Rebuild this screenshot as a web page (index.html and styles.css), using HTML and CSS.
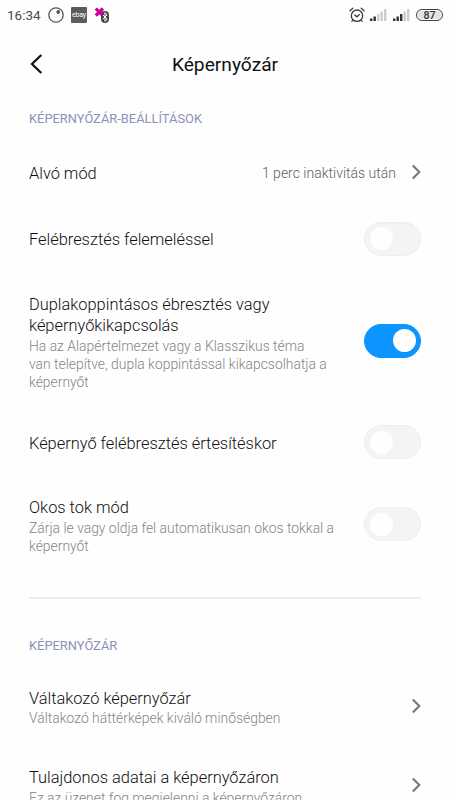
FILE: index.html
```html
<!DOCTYPE html>
<html lang="hu">
<head>
<meta charset="utf-8">
<title>Képernyőzár</title>
<link rel="stylesheet" href="styles.css">
</head>
<body>
<div class="screen">
  <div class="status">
    <span class="clock">16:34</span>
    <svg class="ring" width="16" height="16" viewBox="0 0 16 16"><circle cx="8" cy="8" r="7.2" fill="none" stroke="#555" stroke-width="1.3"/><circle cx="10.2" cy="5" r="1.9" fill="#555"/></svg>
    <span class="ebay">ebay</span>
    <svg class="bt" width="17" height="17" viewBox="0 0 17 17"><rect x="7" y="4" width="8" height="12" rx="4" fill="#444"/><path d="M8.8 7.8l4.4 4.4-2.2 2.2V5.6l2.2 2.2-4.4 4.4" fill="none" stroke="#fff" stroke-width="1"/><path d="M1.8 1.5l6.8 7M9 1.5L1.8 8.5" stroke="#c8009c" stroke-width="3.2"/></svg>
    <span class="spacer"></span>
    <svg class="alarm" width="16" height="16" viewBox="0 0 16 16" fill="none" stroke="#3c3c3c" stroke-width="1.3" stroke-linecap="round"><circle cx="8" cy="8.7" r="5.7"/><path d="M1 3.8L3.8 1.3M12.2 1.3L15 3.8M5.8 8l2.1 1.8L10.4 7.6M3.8 13.4l-1 1M12.2 13.4l1 1"/></svg>
    <svg class="signal" width="17" height="13" viewBox="0 0 17 13"><path d="M0 9.5h2.4V12H0zM3.5 7.5h2.4V12H3.5z" fill="#333"/><path d="M7 5h2.4v7H7zM10.5 2.5h2.4V12h-2.4zM14 0h2.4v12H14z" fill="#ccc"/></svg>
    <svg class="signal second" width="17" height="13" viewBox="0 0 17 13"><path d="M0 9.5h2.4V12H0zM3.5 7.5h2.4V12H3.5zM7 5h2.4v7H7z" fill="#333"/><path d="M10.5 2.5h2.4V12h-2.4zM14 0h2.4v12H14z" fill="#ccc"/></svg>
    <span class="battery">87</span>
  </div>
  <header class="header">
    <svg class="back" width="14" height="22" viewBox="0 0 14 22"><path d="M12.3 2L3 11l9.3 9" fill="none" stroke="#111" stroke-width="2.2"/></svg>
    <h1>Képernyőzár</h1>
  </header>
  <h2 class="section">KÉPERNYŐZÁR-BEÁLLÍTÁSOK</h2>
  <div class="row single">
    <p class="title">Alvó mód</p>
    <span class="value">1 perc inaktivitás után</span>
    <svg class="chevron" width="10" height="16" viewBox="0 0 10 16"><path d="M1.8 1.5L8.3 8l-6.5 6.5"/></svg>
  </div>
  <div class="row single">
    <p class="title">Felébresztés felemeléssel</p>
    <span class="toggle"></span>
  </div>
  <div class="row">
    <div class="text">
      <p class="title">Duplakoppintásos ébresztés vagy<br>képernyőkikapcsolás</p>
      <p class="sub">Ha az Alapértelmezet vagy a Klasszikus téma<br>van telepítve, dupla koppintással kikapcsolhatja a<br>képernyőt</p>
    </div>
    <span class="toggle on"></span>
  </div>
  <div class="row single">
    <p class="title">Képernyő felébresztés értesítéskor</p>
    <span class="toggle"></span>
  </div>
  <div class="row">
    <div class="text">
      <p class="title">Okos tok mód</p>
      <p class="sub">Zárja le vagy oldja fel automatikusan okos tokkal a<br>képernyőt</p>
    </div>
    <span class="toggle"></span>
  </div>
  <hr>
  <h2 class="section">KÉPERNYŐZÁR</h2>
  <div class="row">
    <div class="text">
      <p class="title">Váltakozó képernyőzár</p>
      <p class="sub">Váltakozó háttérképek kiváló minőségben</p>
    </div>
    <svg class="chevron" width="10" height="16" viewBox="0 0 10 16"><path d="M1.8 1.5L8.3 8l-6.5 6.5"/></svg>
  </div>
  <div class="row">
    <div class="text">
      <p class="title">Tulajdonos adatai a képernyőzáron</p>
      <p class="sub">Ez az üzenet fog megjelenni a képernyőzáron</p>
    </div>
    <svg class="chevron" width="10" height="16" viewBox="0 0 10 16"><path d="M1.8 1.5L8.3 8l-6.5 6.5"/></svg>
  </div>
</div>
</body>
</html>
```
FILE: styles.css
```css
* { box-sizing: border-box; }
body { margin: 0; background: #fefefe; font-family: Roboto, "Liberation Sans", sans-serif; }
h1, h2, p { margin: 0; font-weight: 400; }
.screen { width: 450px; height: 800px; overflow: hidden; }
.status { display: flex; align-items: center; height: 30px; padding: 0 7px 0 7px; }
.clock { width: 41px; font-size: 13.5px; line-height: 30px; color: #4a4a4a; }
.ebay { width: 16px; height: 16px; margin: 0 7px; background: #5c5c5c; border-radius: 1px; color: #fff; font-size: 7px; line-height: 16px; text-align: center; letter-spacing: -0.2px; }
.spacer { flex: 1; }
.alarm { margin-right: 5px; }
.second { margin-left: 6px; }
.battery { width: 27px; height: 12px; margin-left: 6px; border: 1px solid #444; border-radius: 6px; background: #e2e2e2; box-shadow: inset 0 0 0 1px #fefefe; font-size: 10.5px; line-height: 11px; font-weight: 500; text-align: center; color: #333; }
.header { display: grid; grid-template-columns: 50px 1fr 50px; align-items: center; height: 68px; }
.back { margin-left: 29px; }
h1 { font-size: 19.2px; text-align: center; color: #111; }
.section { height: 41px; padding-left: 29px; font-size: 12.9px; line-height: 41px; color: #8c92b5; }
.row { display: flex; align-items: center; justify-content: space-between; padding: 20px 29px; }
.single { height: 66.5px; padding-block: 0; }
.single .title { padding-top: 2px; }
.text { margin: 1.5px 0 -1.5px; }
.title { font-size: 16.4px; line-height: 21.5px; font-weight: 350; color: #101010; white-space: nowrap; }
.sub { font-size: 13.9px; line-height: 18px; font-weight: 300; color: #858585; white-space: nowrap; }
.value { margin: 2px 15px 0 auto; font-size: 14px; font-weight: 300; color: #5e5e5e; }
.chevron { flex: none; fill: none; stroke: #777; stroke-width: 2.1; }
.toggle { flex: none; display: flex; align-items: center; width: 57px; height: 34px; padding-left: 5px; border: 1px solid #eee; border-radius: 17px; background: #f4f4f4; }
.toggle::before { content: ""; width: 23px; height: 23px; border-radius: 50%; background: #fefefe; }
.toggle.on { padding: 0 4px 0 0; justify-content: flex-end; background: #0c94ff; border-color: #0c94ff; }
hr { height: 2px; margin: 24px 29px 26px; border: 0; background: #eee; }
```
